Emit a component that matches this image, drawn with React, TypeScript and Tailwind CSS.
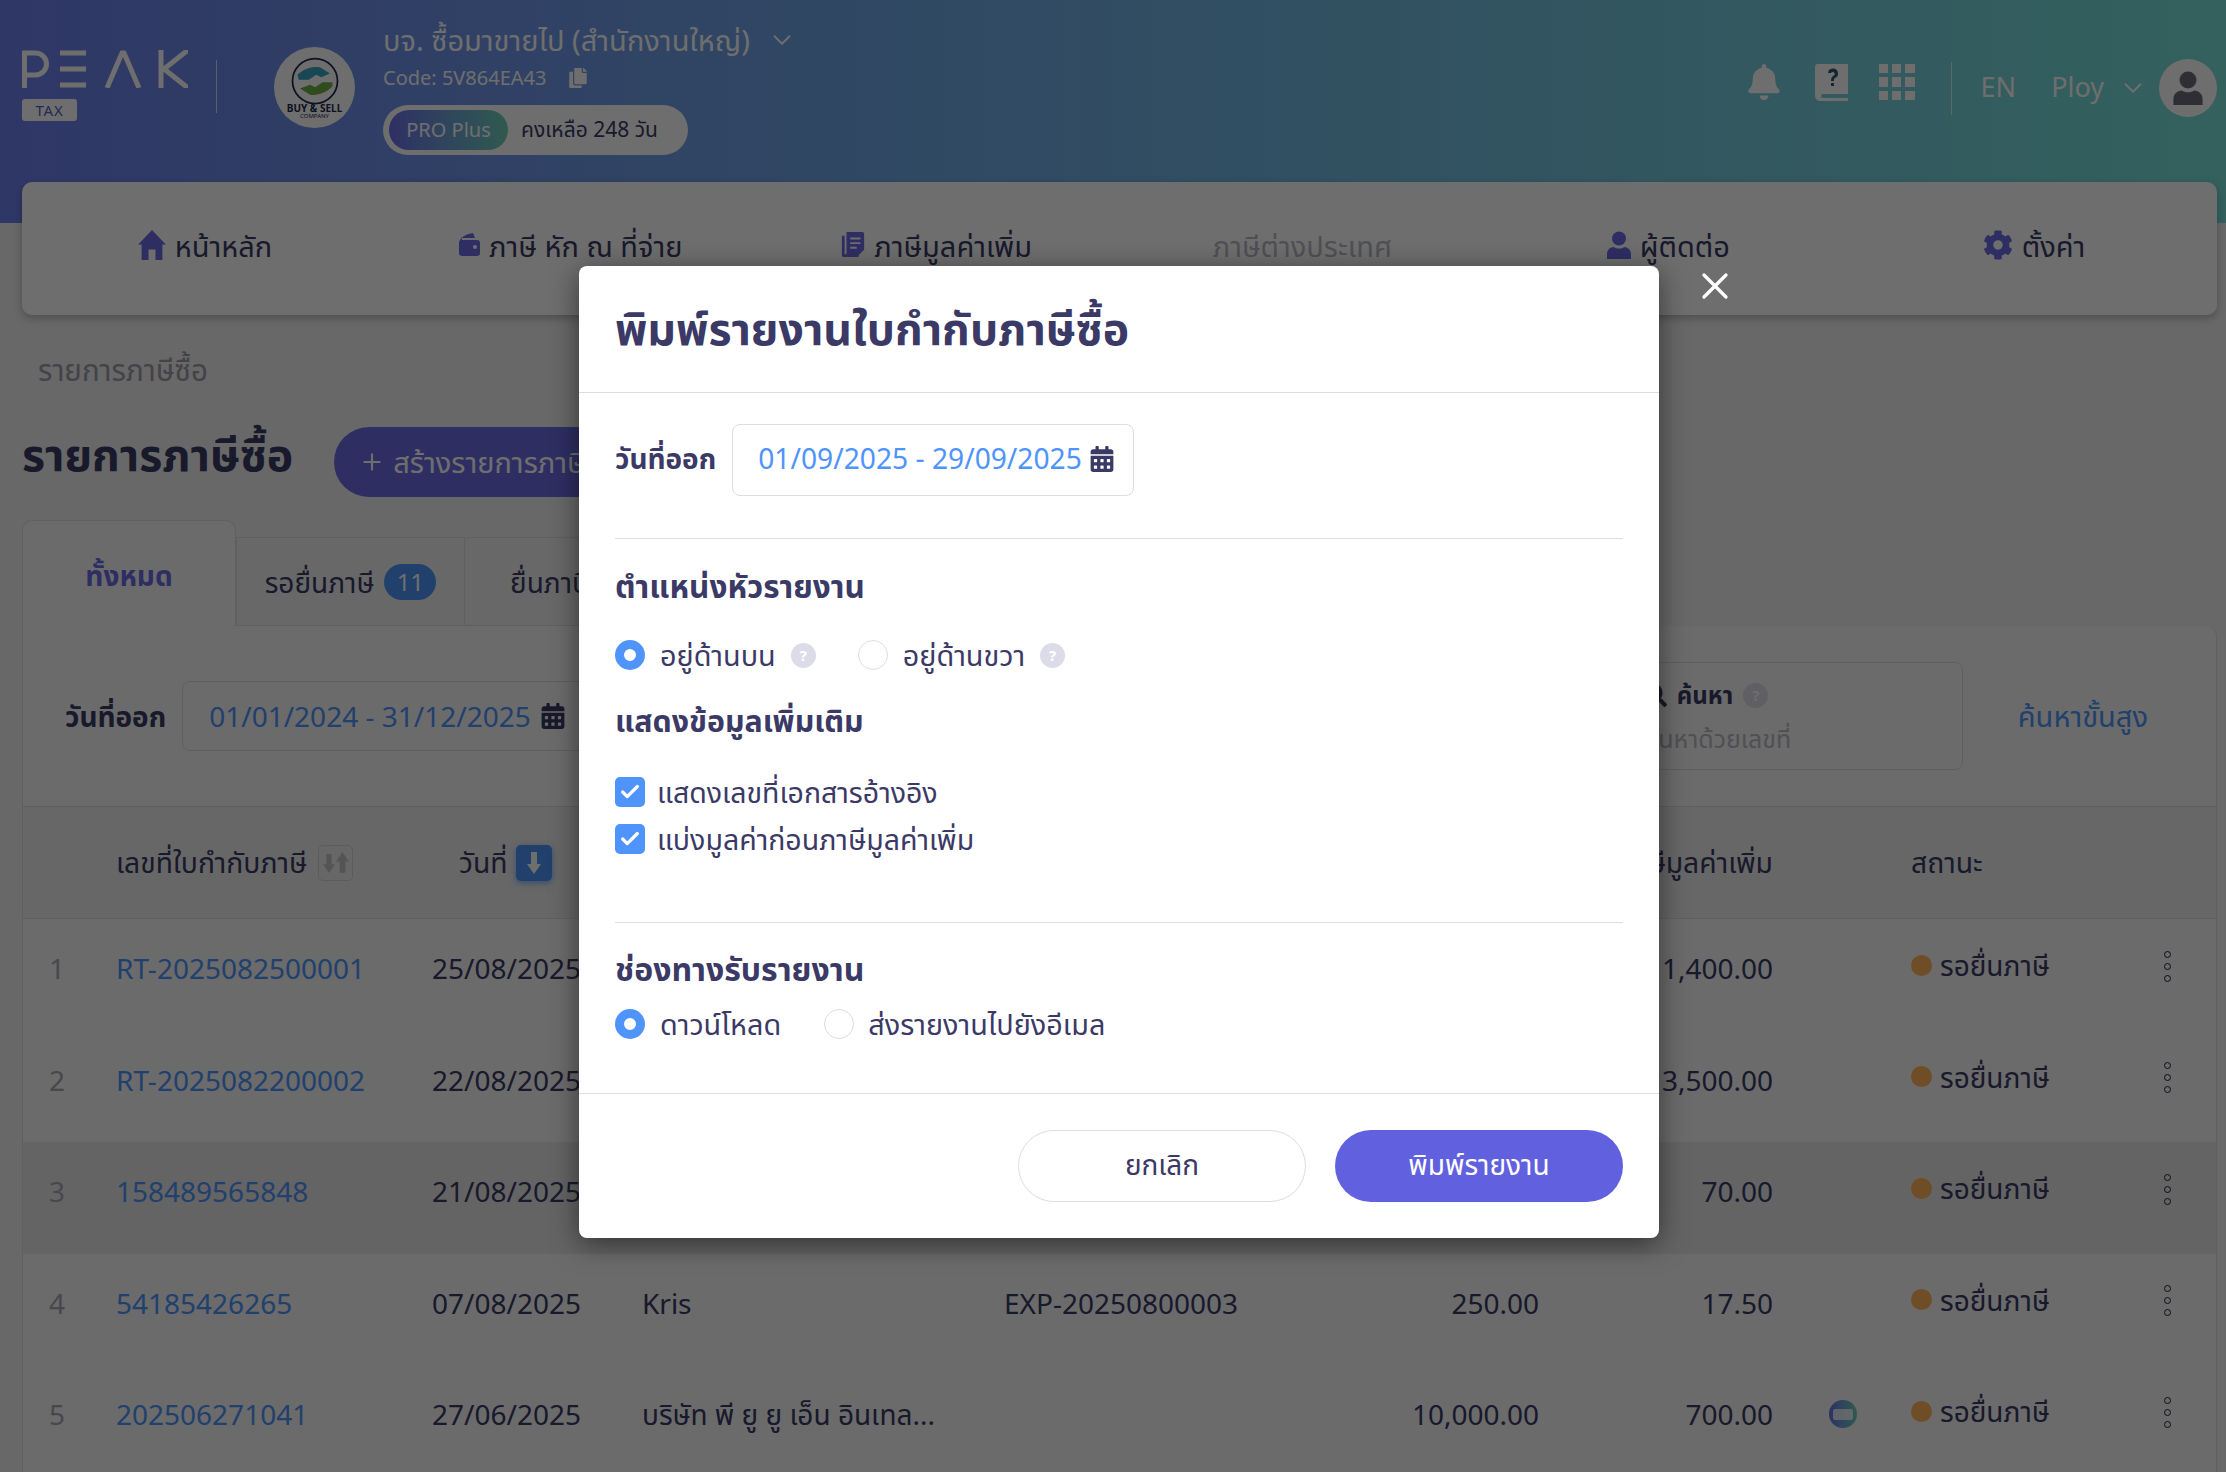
import React from "react";
import { ChevronDown, Check, X, Plus } from "lucide-react";
import { FaBell, FaCalendarAlt, FaCog, FaCopy, FaSearch } from "react-icons/fa";

const HomeIcon = () => (
  <svg viewBox="0 0 24 26" className="h-[30px] w-[28px]" fill="currentColor">
    <path d="M12 0l12 12.500h-3V26h-6v-9H9v9H3V12.500H0z" />
  </svg>
);

const WalletIcon = () => (
  <svg viewBox="0 0 21 23" className="h-[23px] w-[21px]" fill="currentColor">
    <path d="M1 7C2 4 8 1 14 0l2 5H3a2 2 0 0 0 0 2h15a3 3 0 0 1 3 3v10a3 3 0 0 1-3 3H3a3 3 0 0 1-3-3V9z" />
    <circle cx="16" cy="14" r="2" fill="#fff" />
  </svg>
);

const DocIcon = () => (
  <svg viewBox="0 0 24 28" className="h-[26px] w-[24px]" fill="currentColor">
    <path d="M0 4h3v20h15v3H2a2 2 0 0 1-2-2z" />
    <path d="M5 0h17a2 2 0 0 1 2 2v17l-6 6H5z" />
    <path d="M9 6h11v2H9zM9 11h11v2H9zM9 16h7v2H9z" fill="#fff" />
  </svg>
);

const PersonIcon = ({ className }: { className: string }) => (
  <svg viewBox="0 0 24 28" className={className} fill="currentColor">
    <circle cx="12" cy="7.500" r="7" />
    <path d="M0 28v-5c0-4 3-7 7-7 1 1 3 1.500 5 1.500s4-.5 5-1.500c4 0 7 3 7 7v5z" />
  </svg>
);

const ArrowDown = ({ className }: { className: string }) => (
  <svg viewBox="0 0 14 22" className={className} fill="currentColor">
    <path d="M4 0h6v12h4l-7 10-7-10h4z" />
  </svg>
);

const ArrowUp = ({ className }: { className: string }) => (
  <svg viewBox="0 0 14 22" className={className} fill="currentColor">
    <path d="M4 22h6V10h4L7 0 0 10h4z" />
  </svg>
);

const navItems = [
  { label: "หน้าหลัก", icon: <HomeIcon /> },
  { label: "ภาษี หัก ณ ที่จ่าย", icon: <WalletIcon /> },
  { label: "ภาษีมูลค่าเพิ่ม", icon: <DocIcon /> },
  { label: "ภาษีต่างประเทศ", disabled: true },
  { label: "ผู้ติดต่อ", icon: <PersonIcon className="h-[28px] w-[24px]" /> },
  { label: "ตั้งค่า", icon: <FaCog className="h-[30px] w-[30px]" /> },
];

const rows = [
  { no: "RT-2025082500001", date: "25/08/2025", contact: "", ref: "", amount: "", vat: "1,400.00" },
  { no: "RT-2025082200002", date: "22/08/2025", contact: "", ref: "", amount: "", vat: "3,500.00" },
  { no: "158489565848", date: "21/08/2025", contact: "", ref: "", amount: "", vat: "70.00" },
  { no: "54185426265", date: "07/08/2025", contact: "Kris", ref: "EXP-20250800003", amount: "250.00", vat: "17.50" },
  { no: "202506271041", date: "27/06/2025", contact: "บริษัท พี ยู ยู เอ็น อินเทล...", ref: "", amount: "10,000.00", vat: "700.00", tax: true },
];

const Radio = ({ on }: { on?: boolean }) =>
  on ? (
    <span className="block h-[30px] w-[30px] shrink-0 rounded-full border-[9px] border-[#4e94fb] bg-white" />
  ) : (
    <span className="block h-[30px] w-[30px] shrink-0 rounded-full border border-[#dcdce8] bg-white" />
  );

const Help = () => (
  <span className="flex h-[25px] w-[25px] items-center justify-center rounded-full bg-[#dcdce8] text-[15px] font-bold text-white">?</span>
);

const Checkbox = ({ label }: { label: string }) => (
  <div className="flex h-[30px] items-center gap-3">
    <span className="flex h-[30px] w-[30px] items-center justify-center rounded-[5px] bg-[#4e94fb]">
      <Check className="h-[22px] w-[22px] text-white" strokeWidth={3.5} />
    </span>
    <span className="text-[28.5px] leading-none">{label}</span>
  </div>
);

const Logo = () => (
  <div className="flex flex-col gap-[11px]">
    <svg viewBox="0 0 166 38" className="h-[38px] w-[166px]" fill="none" stroke="#fff" strokeWidth="5">
      <path d="M2.500 38V3h11a10 10 0 0 1 0 22h-11" />
      <path d="M38 3h26M38 19h26M38 35h26" />
      <path d="M85 38l15-35h2l15 35" />
      <path d="M139 0v38M166 0l-24 19 24 19" />
    </svg>
    <span className="flex h-[22px] w-[55px] items-center justify-center rounded-[3px] bg-white text-[15px] leading-none tracking-wider text-[#5560c8]">TAX</span>
  </div>
);

const CompanyLogo = () => (
  <div className="flex h-[81px] w-[81px] flex-col items-center justify-center rounded-full bg-white">
    <svg viewBox="0 0 40 40" className="h-[50px] w-[50px]" fill="none">
      <circle cx="20" cy="20" r="18" stroke="#1d2b4d" strokeWidth="1.400" />
      <path d="M6 15c5-5 12-7 18-6l8 5-7 3-4-2-6 4H7z" fill="#3aa5c4" />
      <path d="M34 24c-4 5-12 8-18 7l-8-5 8-3 4 2 6-4h8z" fill="#6fb048" />
    </svg>
    <span className="-mt-[3px] text-[10px] font-bold leading-none text-[#1d2b4d]">BUY &amp; SELL</span>
    <span className="text-[6px] leading-none text-[#1d2b4d]">COMPANY</span>
  </div>
);

const Header = () => (
  <div className="flex h-[223px] items-start bg-gradient-to-r from-[#6d80ec] to-[#78e0d8] text-white">
    <div className="ml-[22px] mt-[50px]">
      <Logo />
    </div>
    <div className="ml-[28px] mt-[60px] h-[53px] w-px bg-white/70" />
    <div className="ml-[57px] mt-[47px]">
      <CompanyLogo />
    </div>
    <div className="ml-[28px] mt-[20px] flex flex-col">
      <div className="flex items-center gap-[17px] text-[29px] leading-[40px]">
        บจ. ซื้อมาขายไป (สำนักงานใหญ่)
        <ChevronDown className="h-[30px] w-[30px]" strokeWidth={1.5} />
      </div>
      <div className="mt-[3px] flex items-center gap-[22px] text-[20px] leading-[30px]">
        Code: 5V864EA43 <FaCopy className="h-[20px] w-[20px]" />
      </div>
      <div className="mt-[12px] flex h-[50px] w-[305px] items-center rounded-full bg-white px-[6px]">
        <span className="flex h-[40px] w-[119px] items-center justify-center rounded-full bg-gradient-to-r from-[#6d6dea] to-[#6fd0b8] text-[20px]">PRO Plus</span>
        <span className="ml-[13px] text-[21px] text-[#3b3a66]">คงเหลือ 248 วัน</span>
      </div>
    </div>
    <div className="ml-auto mr-[9px] mt-[59px] flex items-center">
      <FaBell className="mb-[12px] h-[36px] w-[34px]" />
      <svg viewBox="0 0 33 37" className="mb-[12px] ml-[34px] h-[37px] w-[33px]" fill="currentColor">
        <path d="M3 0h30v30H8a2 2 0 0 0 0 4h25v3H5a5 5 0 0 1-5-5V3a3 3 0 0 1 3-3z" />
        <path d="M13 9a5 5 0 1 1 7 5c-1 1-1 1-1 3h-3c0-3 1-4 2-5a2 2 0 1 0-2-3zM16 19h3v3h-3z" fill="#2f5a66" />
      </svg>
      <div className="mb-[12px] ml-[31px] grid h-[36px] w-[36px] grid-cols-3 gap-[4px]">
        {Array.from({ length: 9 }).map((_, i) => (
          <span key={i} className="bg-white" />
        ))}
      </div>
      <div className="ml-[36px] h-[53px] w-px bg-white/70" />
      <span className="mb-[3px] ml-[29px] text-[27px] leading-none">EN</span>
      <span className="mb-[3px] ml-[35px] text-[27px] leading-none">Ploy</span>
      <ChevronDown className="ml-[14px] h-[30px] w-[30px]" strokeWidth={1.5} />
      <div className="ml-[11px] flex h-[58px] w-[58px] items-center justify-center rounded-full bg-white text-[#6b6b78]">
        <PersonIcon className="h-[34px] w-[30px]" />
      </div>
    </div>
  </div>
);

const Nav = () => (
  <div className="ml-[22px] mr-[9px] -mt-[41px] grid h-[133px] grid-cols-6 rounded-[10px] bg-white pt-[37px] shadow-[0_3px_8px_rgba(0,0,0,0.25)]">
    {navItems.map((n) => (
      <div key={n.label} className="flex h-[54px] items-center justify-center gap-[9px]">
        {n.icon && <span className="-mt-[3px] text-[#6c6ce6]">{n.icon}</span>}
        <span className={`text-[29px] leading-[54px] ${n.disabled ? "text-[#b9b9c4]" : "text-[#3b3a66]"}`}>{n.label}</span>
      </div>
    ))}
  </div>
);

const SortBox = ({ active }: { active?: boolean }) =>
  active ? (
    <span className="flex h-[36px] w-[36px] items-center justify-center rounded-[5px] bg-[#4e94fb] text-white shadow-[0_2px_6px_rgba(78,148,251,0.7)]">
      <ArrowDown className="h-[22px] w-[14px]" />
    </span>
  ) : (
    <span className="flex h-[36px] w-[35px] items-center justify-center gap-[1px] rounded-[5px] border border-[#d6d6de] text-[#c4c4c8]">
      <ArrowDown className="mt-[2px] h-[19px] w-[12px]" />
      <ArrowUp className="h-[23px] w-[13px]" />
    </span>
  );

const colClass = "grid grid-cols-[94px_315px_210px_362px_270px_265px_234px_139px_239px_1fr] items-center";

const Page = () => (
  <div className="ml-[22px] mr-[9px]">
    <div className="ml-[16px] mt-[38px] text-[29.5px] leading-[34px] text-[#9c9ca8]">รายการภาษีซื้อ</div>
    <div className="mt-[40px] flex h-[70px] items-center gap-[41px]">
      <div className="mb-[16px] text-[44.5px] font-bold leading-none text-[#3b3a66]">รายการภาษีซื้อ</div>
      <div className="flex h-[70px] w-[560px] items-center gap-[8px] rounded-full bg-[#6c6ce6] pl-[25px] text-[29px] text-white">
        <Plus className="h-[26px] w-[26px]" strokeWidth={2} /> สร้างรายการภาษีซื้อ
      </div>
    </div>
    <div className="mt-[23px] flex h-[106px] items-end">
      <div className="flex h-[106px] w-[214px] justify-center rounded-t-[10px] border border-b-0 border-[#dedede] bg-[#f7f7f7] pt-[34px] text-[28px] font-bold leading-[40px] text-[#6c6ce6]">ทั้งหมด</div>
      <div className="flex h-[89px] w-[229px] items-center justify-center gap-[10px] border border-[#dedede] text-[28px] text-[#3b3a66]">
        รอยื่นภาษี
        <span className="flex h-[36px] w-[52px] items-center justify-center rounded-full bg-[#4e94fb] text-[24px] leading-none text-white">11</span>
      </div>
      <div className="flex h-[89px] w-[300px] items-center border border-l-0 border-[#dedede] pl-[45px] text-[28px] text-[#3b3a66]">ยื่นภาษี</div>
    </div>
    <div className="h-[860px] overflow-hidden rounded-tr-[10px] border border-t-0 border-[#dedede] bg-[#f7f7f7]">
      <div className="flex h-[180px] items-center">
        <span className="ml-[42px] text-[28px] font-bold text-[#3b3a66]">วันที่ออก</span>
        <div className="ml-[16px] flex h-[70px] w-[520px] items-center gap-[10px] rounded-[8px] border border-[#dcdce4] pl-[26px] text-[28px] text-[#4e94fb]">
          01/01/2024 - 31/12/2025
          <FaCalendarAlt className="h-[26px] w-[24px] text-[#3b3a66]" />
        </div>
        <div className="ml-auto h-[108px] w-[480px] rounded-[8px] border border-[#dcdce4] pl-[159px] pt-[14px]">
          <div className="flex items-center gap-[10px] text-[24px] font-bold leading-[36px] text-[#3b3a66]">
            <FaSearch className="h-[24px] w-[24px]" /> ค้นหา <Help />
          </div>
          <div className="mt-[5px] text-[25px] leading-[40px] text-[#b9b9c4]">ค้นหาด้วยเลขที่</div>
        </div>
        <span className="ml-[55px] mr-[68px] text-[29px] text-[#4e94fb]">ค้นหาขั้นสูง</span>
      </div>
      <div className={`${colClass} h-[113px] border-y border-[#dedede] bg-[#eeeeee] text-[28.3px] text-[#3b3a66]`}>
        <span />
        <span className="-ml-[1px] flex items-center gap-[11px]">เลขที่ใบกำกับภาษี <SortBox /></span>
        <span className="-ml-[1px] flex items-center gap-[8px] pl-[28px]">วันที่ <SortBox active /></span>
        <span />
        <span />
        <span />
        <span className="text-right">ภาษีมูลค่าเพิ่ม</span>
        <span />
        <span className="-ml-[1px]">สถานะ</span>
        <span />
      </div>
      {rows.map((r, i) => (
        <div key={r.no} className={`${colClass} h-[111.5px] pb-[13px] text-[28px] text-[#3b3a66] ${i === 2 ? "bg-[#e7e7e7]" : ""}`}>
          <span className="pl-[26px] text-[#a8a8b0]">{i + 1}</span>
          <span className="-ml-[1px] text-[#4e94fb]">{r.no}</span>
          <span>{r.date}</span>
          <span>{r.contact}</span>
          <span>{r.ref}</span>
          <span className="text-right">{r.amount}</span>
          <span className="text-right">{r.vat}</span>
          <span className="flex justify-center pl-[1px]">
            {r.tax && (
              <span className="flex h-[28px] w-[28px] items-center justify-center rounded-full bg-gradient-to-r from-[#6d6dea] to-[#6fd0b8]">
                <span className="h-[11px] w-[20px] rounded-[2px] bg-white/80" />
              </span>
            )}
          </span>
          <span className="-ml-[1px] -mt-[6px] flex items-center gap-[8px]">
            <span className="h-[21px] w-[21px] rounded-full bg-[#ffb35a]" />
            รอยื่นภาษี
          </span>
          <span className="-mt-[4px] flex flex-col items-center gap-[5px] pr-[33px]">
            <span className="h-[7px] w-[7px] rounded-full border border-[#1f1f3a]" />
            <span className="h-[7px] w-[7px] rounded-full border border-[#1f1f3a]" />
            <span className="h-[7px] w-[7px] rounded-full border border-[#1f1f3a]" />
          </span>
        </div>
      ))}
    </div>
  </div>
);

const Modal = () => (
  <div className="absolute left-[579px] top-[266px] w-[1080px] rounded-[8px] bg-white text-[#3b3a66] shadow-[0_6px_28px_rgba(0,0,0,0.5)]">
    <div className="flex h-[127px] items-center border-b border-[#dcdce8] px-[36px] pb-[2px] text-[44.5px] font-bold leading-none">
      พิมพ์รายงานใบกำกับภาษีซื้อ
    </div>
    <div className="px-[36px]">
      <div className="flex h-[146px] items-start gap-[16px] border-b border-[#dcdce8] pt-[31px]">
        <span className="text-[28px] font-bold leading-[68px]">วันที่ออก</span>
        <div className="flex h-[72px] w-[402px] items-center gap-[8px] rounded-[8px] border border-[#dcdce8] pb-[3px] pl-[25px] text-[28.2px] text-[#4e94fb]">
          01/09/2025 - 29/09/2025
          <FaCalendarAlt className="h-[26px] w-[24px] text-[#3b3a66]" />
        </div>
      </div>
      <div className="mt-[27px] text-[31.5px] font-bold leading-[40px]">ตำแหน่งหัวรายงาน</div>
      <div className="mt-[29px] flex h-[40px] items-center text-[28.8px]">
        <Radio on />
        <span className="ml-[15px]">อยู่ด้านบน</span>
        <span className="ml-[15px]"><Help /></span>
        <span className="ml-[42px]"><Radio /></span>
        <span className="ml-[15px]">อยู่ด้านขวา</span>
        <span className="ml-[15px]"><Help /></span>
      </div>
      <div className="mt-[26px] text-[30.3px] font-bold leading-[40px]">แสดงข้อมูลเพิ่มเติม</div>
      <div className="mt-[36px] flex flex-col gap-[17px] border-b border-[#dcdce8] pb-[68px]">
        <Checkbox label="แสดงเลขที่เอกสารอ้างอิง" />
        <Checkbox label="แบ่งมูลค่าก่อนภาษีมูลค่าเพิ่ม" />
      </div>
      <div className="mt-[26px] text-[32px] font-bold leading-[40px]">ช่องทางรับรายงาน</div>
      <div className="mt-[15px] flex h-[40px] items-center text-[28.8px]">
        <Radio on />
        <span className="ml-[15px]">ดาวน์โหลด</span>
        <span className="ml-[43px]"><Radio /></span>
        <span className="ml-[14px]">ส่งรายงานไปยังอีเมล</span>
      </div>
    </div>
    <div className="mt-[49px] flex h-[145px] items-center justify-end gap-[29px] border-t border-[#dcdce8] px-[36px] pb-[1px]">
      <button className="h-[72px] w-[288px] rounded-full border border-[#dcdce8] bg-white pb-[4px] text-[28px]">ยกเลิก</button>
      <button className="h-[72px] w-[288px] rounded-full bg-[#6161e0] pb-[4px] text-[28px] text-white">พิมพ์รายงาน</button>
    </div>
  </div>
);

export default function App() {
  return (
    <div className="relative h-[1472px] w-[2226px] overflow-hidden bg-[#f0f0f0] font-['Noto_Sans','Noto_Sans_Thai',sans-serif]">
      <Header />
      <Nav />
      <Page />
      <div className="absolute inset-0 bg-black/[0.57]" />
      <Modal />
      <X className="absolute left-[1693px] top-[264px] h-[44px] w-[44px] text-white" strokeWidth={1.8} />
    </div>
  );
}
